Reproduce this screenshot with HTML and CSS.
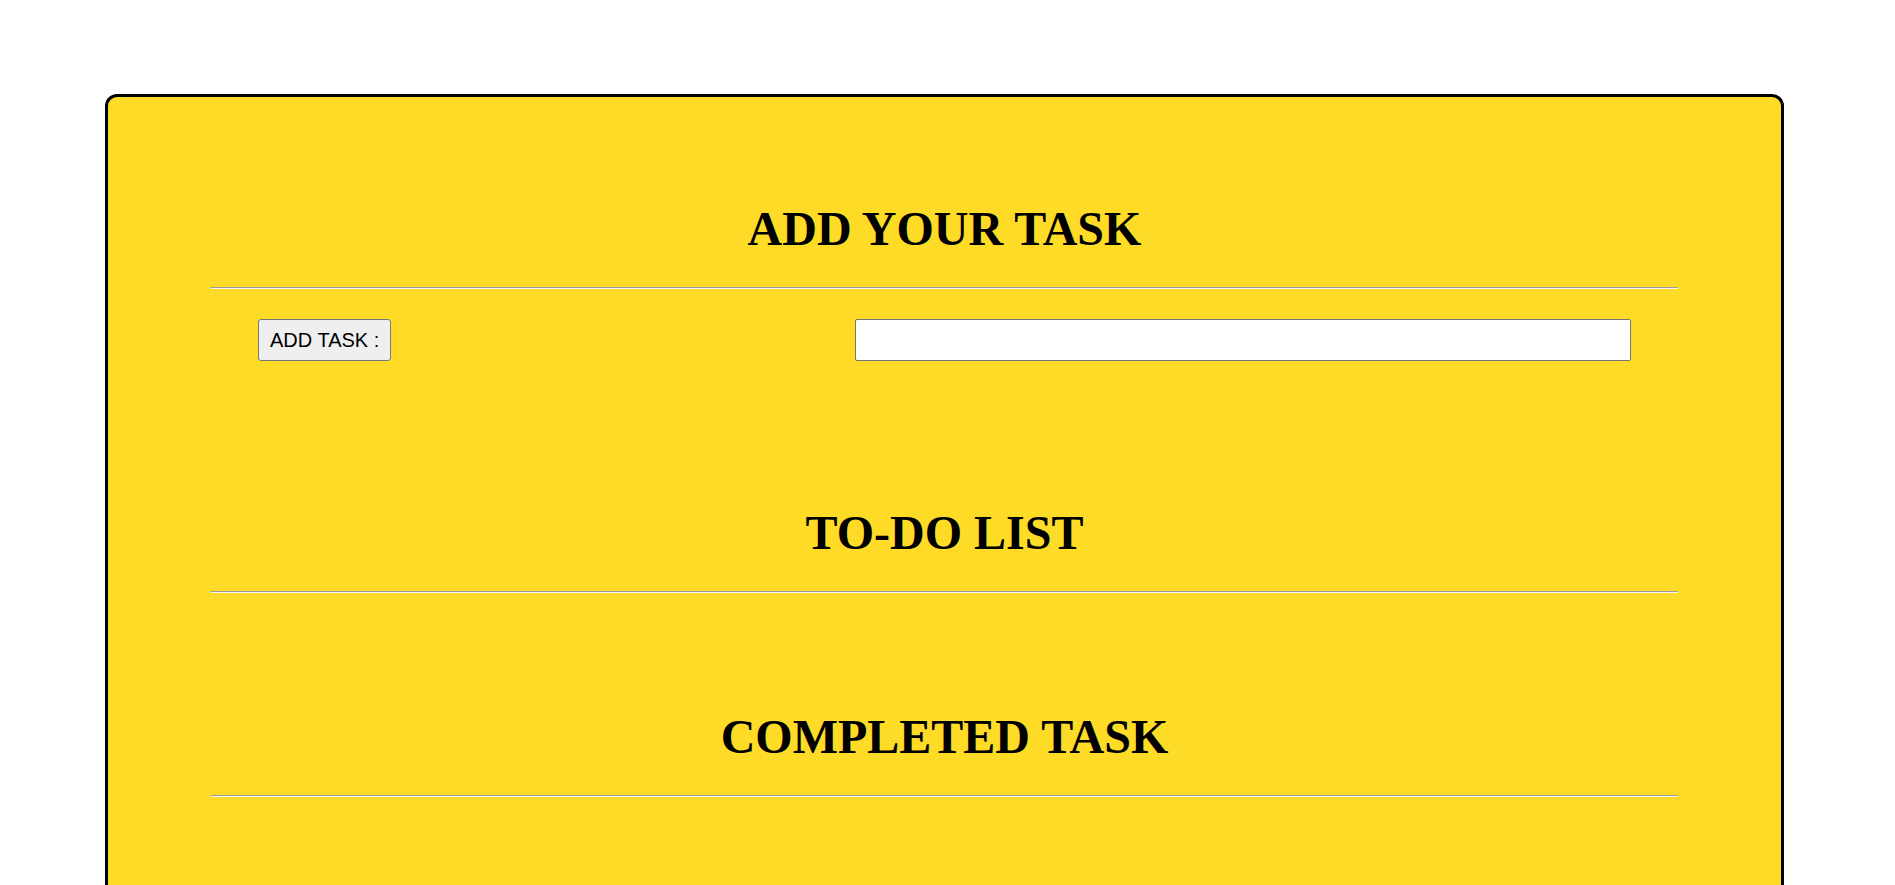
FILE: index.html
```html
<!DOCTYPE html>
<html>
<head>
<meta charset="utf-8">
<title>To-Do</title>
<link rel="stylesheet" href="styles.css">
</head>
<body>
<div class="page">
  <div class="card">
    <h1 class="title">ADD YOUR TASK</h1>
    <hr class="rule">
    <div class="add-row">
      <button class="add-btn">ADD TASK :</button>
      <input class="task-input" type="text">
    </div>
    <h1 class="title title-todo">TO-DO LIST</h1>
    <hr class="rule">
    <ul class="list"></ul>
    <h1 class="title title-done">COMPLETED TASK</h1>
    <hr class="rule">
    <ul class="list"></ul>
  </div>
</div>
</body>
</html>
```

FILE: styles.css
```css
html, body {
  margin: 0;
  padding: 0;
  height: 885px;
  overflow: hidden;
  background: #ffffff;
}

.page {
  padding-top: 94px;
  padding-left: 105px;
}

.card {
  box-sizing: border-box;
  width: 1679px;
  min-height: 900px;
  background: #fddb27;
  border: 3px solid #000000;
  border-radius: 12px;
  padding: 105px 103px 0 103px;
}

.title {
  margin: 0 0 32px 0;
  font-family: "Liberation Serif", "Times New Roman", serif;
  font-size: 48px;
  font-weight: bold;
  line-height: 53px;
  text-align: center;
  color: #000000;
}

.title-todo {
  margin-top: 145px;
}

.title-done {
  margin-top: 117px;
}

.rule {
  margin: 0;
  height: 0;
  border: none;
  border-top: 1px solid #9c9c9c;
  border-bottom: 1px solid #f4f4f4;
}

.add-row {
  display: flex;
  justify-content: space-between;
  align-items: center;
  padding: 30px 47px 0 47px;
}

.add-btn {
  box-sizing: border-box;
  height: 42px;
  padding: 0 11px;
  font-family: "Liberation Sans", Arial, sans-serif;
  font-size: 20px;
  color: #000000;
  background: #efefef;
  border: 1px solid #767676;
  border-radius: 3px;
}

.task-input {
  box-sizing: border-box;
  width: 776px;
  height: 42px;
  margin: 0;
  padding: 2px 4px;
  background: #ffffff;
  border: 1px solid #767676;
  border-radius: 2px;
  font-family: "Liberation Sans", Arial, sans-serif;
  font-size: 16px;
}

.list {
  margin: 0;
  padding: 0;
  list-style: none;
}
```
